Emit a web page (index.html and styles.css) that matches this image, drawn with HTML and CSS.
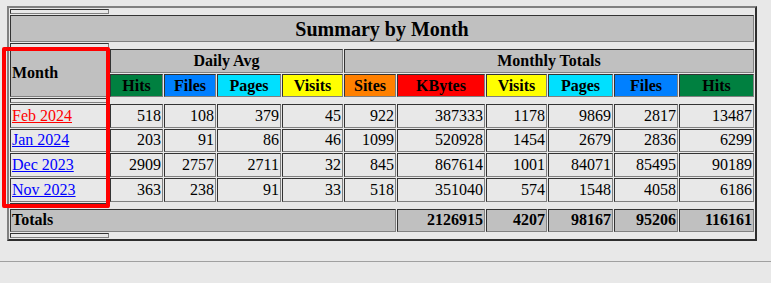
FILE: index.html
```html
<!DOCTYPE html>
<html>
<head>
<meta charset="utf-8">
<title>Summary by Month</title>
<link rel="stylesheet" href="styles.css">
</head>
<body>
<div class="page">
<table class="summary">
<tr class="gap"><th></th></tr>
<tr><th colspan="11" class="title">Summary by Month</th></tr>
<tr class="gap"><th></th></tr>
<tr class="group">
<th rowspan="2" class="month-h">Month</th>
<th colspan="4">Daily Avg</th>
<th colspan="6">Monthly Totals</th>
</tr>
<tr class="metrics">
<th class="hits w53">Hits</th>
<th class="files w52">Files</th>
<th class="pages w64">Pages</th>
<th class="visits w61">Visits</th>
<th class="sites w52">Sites</th>
<th class="kbytes w88">KBytes</th>
<th class="visits w61">Visits</th>
<th class="pages w65">Pages</th>
<th class="files w64">Files</th>
<th class="hits w75">Hits</th>
</tr>
<tr class="gap"><th></th></tr>
<tr class="data">
<td class="m"><a href="#" class="current">Feb 2024</a></td>
<td>518</td><td>108</td><td>379</td><td>45</td>
<td>922</td><td>387333</td><td>1178</td><td>9869</td><td>2817</td><td>13487</td>
</tr>
<tr class="data">
<td class="m"><a href="#">Jan 2024</a></td>
<td>203</td><td>91</td><td>86</td><td>46</td>
<td>1099</td><td>520928</td><td>1454</td><td>2679</td><td>2836</td><td>6299</td>
</tr>
<tr class="data">
<td class="m"><a href="#">Dec 2023</a></td>
<td>2909</td><td>2757</td><td>2711</td><td>32</td>
<td>845</td><td>867614</td><td>1001</td><td>84071</td><td>85495</td><td>90189</td>
</tr>
<tr class="data">
<td class="m"><a href="#">Nov 2023</a></td>
<td>363</td><td>238</td><td>91</td><td>33</td>
<td>518</td><td>351040</td><td>574</td><td>1548</td><td>4058</td><td>6186</td>
</tr>
<tr class="gap"><th></th></tr>
<tr class="totals">
<th colspan="6" class="totals-label">Totals</th>
<th>2126915</th><th>4207</th><th>98167</th><th>95206</th><th>116161</th>
</tr>
<tr class="gap"><th></th></tr>
</table>
</div>
<div class="rule"></div>
<div class="highlight"></div>
</body>
</html>
```
FILE: styles.css
```css
html, body {
  margin: 0;
  padding: 0;
}
body {
  background: #e8e8e8;
  font-family: "Liberation Serif", "Times New Roman", serif;
  font-size: 16px;
  color: #000;
  position: relative;
  min-height: 283px;
}
.page {
  padding: 6px 0 0 7px;
}
.summary {
  border-collapse: separate;
  border-spacing: 1px;
  border: 2px solid;
  border-color: #808080 #2e2e2e #2e2e2e #808080;
}
.summary th,
.summary td {
  box-sizing: border-box;
  border: 1px solid;
  border-color: #333333 #808080 #808080 #333333;
  padding: 0 1px;
  line-height: 18px;
  white-space: nowrap;
}
.summary th {
  background: #c0c0c0;
  font-weight: bold;
  text-align: center;
}
.gap th {
  height: 5px;
  padding: 0;
  background: transparent;
}
.title {
  height: 27px;
  font-size: 20px;
  line-height: 23px;
}
.group th {
  height: 24px;
}
.month-h {
  width: 99px;
  text-align: left !important;
}
.metrics th {
  height: 23px;
}
.data td {
  height: 23.67px;
  text-align: right;
  background: transparent;
}
.data td.m {
  text-align: left;
}
.totals th {
  height: 23.67px;
  text-align: right;
}
.totals th.totals-label {
  text-align: left;
}
a {
  color: #0000ff;
  text-decoration: underline;
}
a.current {
  color: #ff0000;
}
.hits { background: #008040 !important; }
.files { background: #0080ff !important; }
.pages { background: #00e0ff !important; }
.visits { background: #ffff00 !important; }
.sites { background: #ff8000 !important; }
.kbytes { background: #ff0000 !important; }
.w52 { width: 52px; }
.w53 { width: 53px; }
.w61 { width: 61px; }
.w64 { width: 64px; }
.w65 { width: 65px; }
.w75 { width: 75px; }
.w88 { width: 88px; }
.rule {
  height: 1px;
  background: #a0a0a0;
  margin-top: 20px;
}
.highlight {
  position: absolute;
  left: 2px;
  top: 47px;
  width: 108px;
  height: 161px;
  box-sizing: border-box;
  border: 4px solid #ff0000;
  border-radius: 2px;
}
```
